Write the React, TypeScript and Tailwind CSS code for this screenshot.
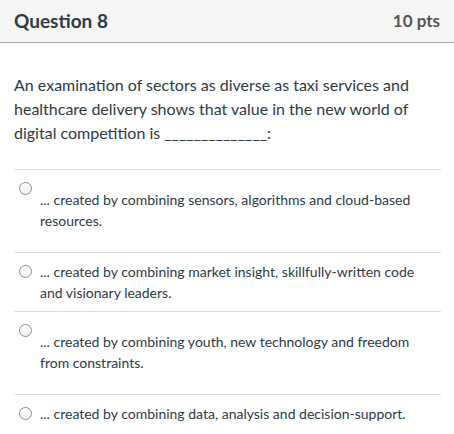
import React from "react";

interface Answer {
  id: string;
  text: string;
  stacked: boolean;
}

const answers: Answer[] = [
  { id: "a1", text: "... created by combining sensors, algorithms and cloud-based resources.", stacked: true },
  { id: "a2", text: "... created by combining market insight, skillfully-written code and visionary leaders.", stacked: false },
  { id: "a3", text: "... created by combining youth, new technology and freedom from constraints.", stacked: true },
  { id: "a4", text: "... created by combining data, analysis and decision-support.", stacked: false },
];

const Radio = () => (
  <span className="block w-[13px] h-[13px] shrink-0 rounded-full border border-[#8f8f8f] bg-gradient-to-b from-white to-[#f2f2f2]" />
);

const App: React.FC = () => {
  return (
    <div className="w-[454px] h-[434px] overflow-hidden bg-white text-[#2d3b45]" style={{ fontFamily: "Lato, 'Open Sans', sans-serif" }}>
      <div className="h-[43px] flex items-center justify-between pl-[14px] pr-[14px] bg-[#f5f5f5] border-b border-[#a8a8a8]">
        <h2 className="text-[19px] font-bold text-[#2d3b45]">Question 8</h2>
        <span className="text-[17px] font-bold text-[#555555]">10 pts</span>
      </div>

      <div className="px-[14px] pr-[13px]">
        <p className="pt-[30px] pb-[24px] text-[16px] leading-[24px] border-b border-[#dedede]">
          An examination of sectors as diverse as taxi services and healthcare delivery shows that value in the new world of digital competition is ______________:
        </p>

        {answers.map((a, i) =>
          a.stacked ? (
            <div
              key={a.id}
              className={`pt-[12px] pb-[21px] pl-[5px] pr-[16px] ${i < answers.length - 1 ? "border-b border-[#dedede]" : ""}`}
            >
              <Radio />
              <div className="-mt-[6px] pl-[21px] text-[14px] leading-[21px]">{a.text}</div>
            </div>
          ) : (
            <div
              key={a.id}
              className={`flex items-start gap-[8px] pt-[8px] pb-[8px] pl-[5px] pr-[16px] ${i < answers.length - 1 ? "border-b border-[#dedede]" : ""}`}
            >
              <span className="pt-[4px]">
                <Radio />
              </span>
              <div className="text-[14px] leading-[21px]">{a.text}</div>
            </div>
          )
        )}
      </div>
    </div>
  );
};

export default App;
